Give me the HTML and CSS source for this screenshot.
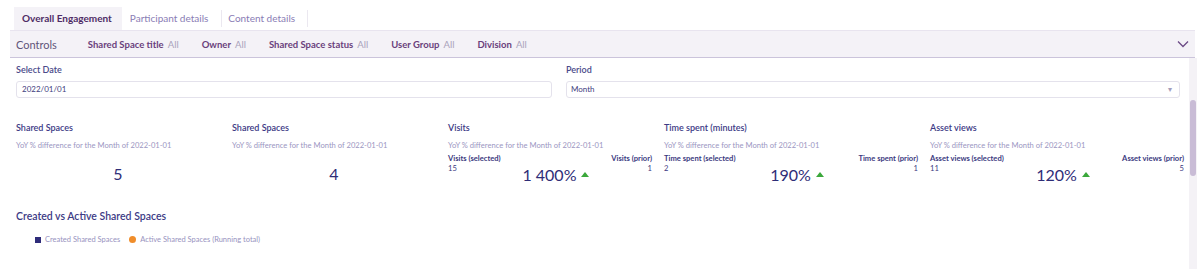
FILE: index.html
```html
<!DOCTYPE html>
<html lang="en">
<head>
  <meta charset="UTF-8">
  <title>Overall Engagement</title>
  <link rel="stylesheet" href="styles.css">
</head>
<body>
  <div class="tabs">
    <div class="tab active">Overall Engagement</div>
    <div class="tab">Participant details</div>
    <div class="tab sep">Content details</div>
  </div>

  <div class="controls">
    <span class="controls-title">Controls</span>
    <span class="filter"><b>Shared Space title</b> All</span>
    <span class="filter"><b>Owner</b> All</span>
    <span class="filter"><b>Shared Space status</b> All</span>
    <span class="filter"><b>User Group</b> All</span>
    <span class="filter"><b>Division</b> All</span>
    <svg class="chevron" width="12" height="8" viewBox="0 0 12 8"><path d="M1 1.5 6 6.5 11 1.5" fill="none" stroke="#6b4a86" stroke-width="1.3"/></svg>
  </div>

  <div class="main">
    <div class="content">
      <div class="params">
        <div class="param date">
          <label>Select Date</label>
          <div class="field">2022/01/01</div>
        </div>
        <div class="param period">
          <label>Period</label>
          <div class="field select">Month <span class="caret">&#9662;</span></div>
        </div>
      </div>

      <div class="kpis">
        <div class="kpi narrow">
          <div class="kpi-title">Shared Spaces</div>
          <div class="kpi-sub">YoY % difference for the Month of 2022-01-01</div>
          <div class="kpi-big single">5</div>
        </div>
        <div class="kpi narrow">
          <div class="kpi-title">Shared Spaces</div>
          <div class="kpi-sub">YoY % difference for the Month of 2022-01-01</div>
          <div class="kpi-big single">4</div>
        </div>
        <div class="kpi narrow">
          <div class="kpi-title">Visits</div>
          <div class="kpi-sub">YoY % difference for the Month of 2022-01-01</div>
          <div class="kpi-compare">
            <div class="side"><b>Visits (selected)</b><span>15</span></div>
            <div class="kpi-big">1 400% <span class="up"></span></div>
            <div class="side right"><b>Visits (prior)</b><span>1</span></div>
          </div>
        </div>
        <div class="kpi wide">
          <div class="kpi-title">Time spent (minutes)</div>
          <div class="kpi-sub">YoY % difference for the Month of 2022-01-01</div>
          <div class="kpi-compare">
            <div class="side"><b>Time spent (selected)</b><span>2</span></div>
            <div class="kpi-big">190% <span class="up"></span></div>
            <div class="side right"><b>Time spent (prior)</b><span>1</span></div>
          </div>
        </div>
        <div class="kpi wide">
          <div class="kpi-title">Asset views</div>
          <div class="kpi-sub">YoY % difference for the Month of 2022-01-01</div>
          <div class="kpi-compare">
            <div class="side"><b>Asset views (selected)</b><span>11</span></div>
            <div class="kpi-big">120% <span class="up"></span></div>
            <div class="side right"><b>Asset views (prior)</b><span>5</span></div>
          </div>
        </div>
      </div>

      <div class="chart">
        <div class="chart-title">Created vs Active Shared Spaces</div>
        <div class="legend">
          <span class="item"><i class="sq"></i>Created Shared Spaces</span>
          <span class="item"><i class="dot"></i>Active Shared Spaces (Running total)</span>
        </div>
      </div>
    </div>
    <div class="scrollbar"><div class="thumb"></div></div>
  </div>
</body>
</html>
```

FILE: styles.css
```css
body {
  margin: 0;
  font-family: Lato, "Open Sans", sans-serif;
  background: #fff;
  color: #34327c;
  width: 1200px;
  height: 269px;
  overflow: hidden;
}
.tabs {
  display: flex;
  padding: 7px 0 0 14px;
  height: 23px;
}
.tab {
  padding: 0 13px 0 8px;
  font-size: 10px;
  line-height: 23px;
  color: #8a7db5;
}
.tab.active {
  background: #f4f2f7;
  color: #4f2c66;
  font-weight: 700;
  padding: 0 10px 0 8px;
}
.tab.sep {
  border-left: 1px solid #ebe8f0;
  border-right: 1px solid #ebe8f0;
  margin-top: 3px;
  line-height: 17px;
  height: 17px;
  padding: 0 12px 0 6px;
}
.controls {
  display: flex;
  align-items: center;
  margin: 0 5px 0 10px;
  height: 26px;
  padding-left: 6px;
  background: #f4f2f7;
  border-top: 1px solid #e8e4ef;
  border-bottom: 1px solid #cbc4db;
}
.controls-title {
  font-size: 11px;
  color: #5f5478;
  margin-right: 31px;
}
.filter {
  font-size: 9.5px;
  color: #aaa2bb;
  margin-right: 23px;
}
.filter b {
  color: #6a3f7c;
  font-weight: 700;
  margin-right: 2px;
}
.chevron {
  margin-left: auto;
  margin-right: 6px;
}
.main {
  display: flex;
  height: 211px;
}
.content {
  flex: 1;
  padding: 5px 0 0 16px;
}
.scrollbar {
  width: 8px;
  margin: 0 3px 0 0;
  background: #f4f2f6;
  padding-top: 42px;
}
.thumb {
  width: 6px;
  margin: 0 auto;
  height: 76px;
  border-radius: 3px;
  background: #c9bcd6;
}
.params {
  display: flex;
  gap: 14px;
}
.param label {
  display: block;
  font-size: 9px;
  font-weight: 600;
  color: #4a4a8a;
  height: 18px;
  line-height: 14px;
}
.param.date { width: 536px; }
.param.period { width: 614px; }
.field {
  height: 15px;
  border: 1px solid #e4e2ec;
  border-radius: 3px;
  font-size: 8px;
  line-height: 15px;
  padding-left: 5px;
  color: #3f3d7e;
}
.field.select {
  display: flex;
  padding-left: 4px;
}
.caret {
  margin-left: auto;
  margin-right: 7px;
  color: #a39dbb;
  font-size: 8px;
}
.kpis {
  display: flex;
  gap: 12px;
  margin-top: 23px;
}
.kpi.narrow { width: 204px; }
.kpi.wide { width: 254px; }
.kpi-title {
  font-size: 9px;
  font-weight: 600;
  color: #3c3a85;
  line-height: 14px;
}
.kpi-sub {
  font-size: 7.6px;
  color: #9b96c2;
  margin-top: 4px;
  line-height: 12px;
}
.kpi-big {
  font-size: 16px;
  color: #2f2d77;
  display: flex;
  align-items: center;
  gap: 5px;
}
.kpi-big.single {
  justify-content: center;
  margin-top: 13px;
}
.kpi-compare {
  display: flex;
  margin-top: 2px;
}
.kpi-compare .kpi-big {
  flex: 1;
  justify-content: center;
  padding-top: 12px;
}
.side {
  display: flex;
  flex-direction: column;
  font-size: 7.6px;
  line-height: 10px;
  color: #3b3980;
}
.side b { font-weight: 700; }
.side.right { text-align: right; }
.up {
  width: 0;
  height: 0;
  border-left: 4.5px solid transparent;
  border-right: 4.5px solid transparent;
  border-bottom: 5px solid #3ba83b;
}
.chart {
  margin-top: 26px;
}
.chart-title {
  font-size: 10.5px;
  font-weight: 600;
  color: #3c3a85;
}
.legend {
  display: flex;
  gap: 9px;
  margin: 13px 0 0 19px;
  font-size: 7.5px;
  color: #9893c0;
}
.legend .item {
  display: flex;
  align-items: center;
  gap: 4px;
}
.sq {
  width: 6px;
  height: 6px;
  background: #2f2c7a;
}
.dot {
  width: 7px;
  height: 7px;
  border-radius: 50%;
  background: #f08d2a;
}
```
